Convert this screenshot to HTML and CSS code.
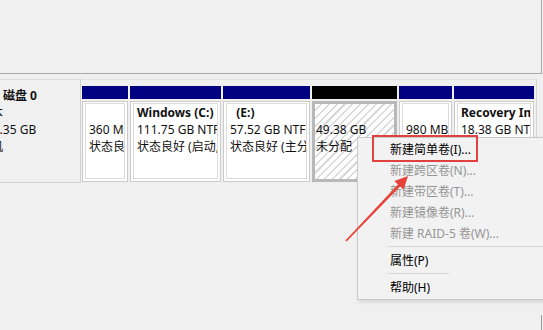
FILE: index.html
```html
<!DOCTYPE html>
<html lang="zh-CN">
<head>
<meta charset="utf-8">
<title>磁盘管理</title>
<link rel="stylesheet" href="styles.css">
</head>
<body>
  <div class="top-pane"></div>

  <div class="disk-row">
    <div class="disk-label">
      <div class="label-inner">
        <div class="disk-name">磁盘 0</div>
        <div>基本</div>
        <div>238.35 GB</div>
        <div>联机</div>
      </div>
    </div>

    <div class="parts">
      <div class="part w1">
        <div class="bar"></div>
        <div class="pbody"><div class="inner">
          <div class="t b">&nbsp;</div>
          <div class="t">360 MB</div>
          <div class="t">状态良好 (EFI 系统分区)</div>
        </div></div>
      </div>
      <div class="part w2">
        <div class="bar"></div>
        <div class="pbody"><div class="inner">
          <div class="t b">Windows (C:)</div>
          <div class="t">111.75 GB NTFS</div>
          <div class="t">状态良好 (启动, 页面文件, 故障转储, 主分区)</div>
        </div></div>
      </div>
      <div class="part w3">
        <div class="bar"></div>
        <div class="pbody"><div class="inner">
          <div class="t b">&nbsp;&nbsp;(E:)</div>
          <div class="t">57.52 GB NTFS</div>
          <div class="t">状态良好 (主分区)</div>
        </div></div>
      </div>
      <div class="part w4">
        <div class="bar black"></div>
        <div class="pbody hatched"><div class="inner plain">
          <div class="t b">&nbsp;</div>
          <div class="t">49.38 GB</div>
          <div class="t">未分配</div>
        </div></div>
      </div>
      <div class="part w5">
        <div class="bar"></div>
        <div class="pbody"><div class="inner">
          <div class="t b">&nbsp;</div>
          <div class="t">980 MB</div>
          <div class="t">状态良好 (恢复分区)</div>
        </div></div>
      </div>
      <div class="part w6">
        <div class="bar"></div>
        <div class="pbody"><div class="inner">
          <div class="t b">Recovery Image</div>
          <div class="t">18.38 GB NTFS</div>
          <div class="t">状态良好 (OEM 分区)</div>
        </div></div>
      </div>
    </div>
  </div>

  <div class="lower-pane"></div>

  <div class="menu">
    <div class="item">新建简单卷(I)...</div>
    <div class="item off">新建跨区卷(N)...</div>
    <div class="item off">新建带区卷(T)...</div>
    <div class="item off">新建镜像卷(R)...</div>
    <div class="item off">新建 RAID-5 卷(W)...</div>
    <div class="sep"></div>
    <div class="item">属性(P)</div>
    <div class="sep short"></div>
    <div class="item">帮助(H)</div>
  </div>

  <div class="highlight"></div>

  <svg class="arrow" width="543" height="330" viewBox="0 0 543 330" xmlns="http://www.w3.org/2000/svg">
    <path d="M345.4 240.6 L397.9 184.4 L394.4 181.0 L408 176 L403.6 189.8 L400.1 186.4 L346.6 241.4 Z" fill="#e8433a"/>
  </svg>
</body>
</html>
```

FILE: styles.css
```css
* { box-sizing: border-box; }

html, body {
  margin: 0;
  padding: 0;
}

body {
  position: relative;
  width: 543px;
  height: 330px;
  overflow: hidden;
  background: #f0f0f0;
  font-family: "Noto Sans", "Noto Sans CJK SC", sans-serif;
  font-size: 12px;
  color: #111;
}

.top-pane {
  width: 542px;
  height: 74px;
  border-right: 1px solid #a9a9a9;
  border-bottom: 1px solid #a9a9a9;
}

.disk-row {
  display: flex;
  margin-top: 5px;
  height: 104px;
}

.disk-label {
  flex: 0 0 81px;
  height: 104px;
  overflow: hidden;
  border-top: 1px solid #dcdcdc;
  border-right: 1px solid #d2d2d2;
  border-bottom: 1px solid #cfcfcf;
  background: #f0f0f0;
}

.label-inner {
  margin-left: -21px;
  padding-top: 7px;
  line-height: 17px;
  white-space: nowrap;
}

.disk-name {
  padding-left: 24px;
  font-weight: bold;
}

.parts {
  flex: 0 0 456px;
  display: flex;
  gap: 2px;
  padding: 6px 0 1px 1px;
  border-top: 1px solid #e2e2e2;
  border-right: 1px solid #d6d6d6;
}

.part {
  display: flex;
  flex-direction: column;
}

.w1 { width: 46px; }
.w2 { width: 91px; }
.w3 { width: 87px; }
.w4 { width: 85px; }
.w5 { width: 53px; }
.w6 { width: 80px; }

.bar {
  height: 13px;
  margin-bottom: 2px;
  background: #000080;
}

.bar.black { background: #000; }

.pbody {
  flex: 1;
  min-height: 0;
  padding: 1px 2px 2px 2px;
  border: 1px solid #cbcbcb;
  background: #fff;
}

.inner {
  height: 100%;
  padding: 0 3px;
  border: 1px solid #dcdcdc;
  overflow: hidden;
  white-space: nowrap;
  line-height: 17px;
}

.pbody.hatched {
  padding: 0;
  border: 3px solid #b8b8b8;
  background: repeating-linear-gradient(135deg, #ffffff 0 4px, #d9d9d9 4px 5.5px);
}

.inner.plain {
  border: none;
  padding: 0 1px;
}

.t.b { font-weight: bold; }

.lower-pane {
  width: 542px;
  height: 15px;
  margin-top: 132px;
  border-right: 1px solid #9a9a9a;
}

.menu {
  position: absolute;
  left: 357px;
  top: 137px;
  width: 200px;
  padding: 1px 0;
  background: #f2f2f2;
  border: 1px solid #cacaca;
  box-shadow: 2px 2px 4px rgba(0, 0, 0, 0.12);
  font-size: 12px;
}

.item {
  height: 21px;
  line-height: 21px;
  padding-left: 32px;
  color: #000;
  white-space: nowrap;
}

.item.off { color: #959595; }

.sep {
  height: 1px;
  margin: 2px 0 3px 29px;
  background: #d7d7d7;
}

.sep.short { margin-right: 107px; }

.highlight {
  position: absolute;
  left: 372px;
  top: 135px;
  width: 106px;
  height: 27px;
  border: 2px solid #e2423f;
}

.arrow {
  position: absolute;
  left: 0;
  top: 0;
  pointer-events: none;
}
```
